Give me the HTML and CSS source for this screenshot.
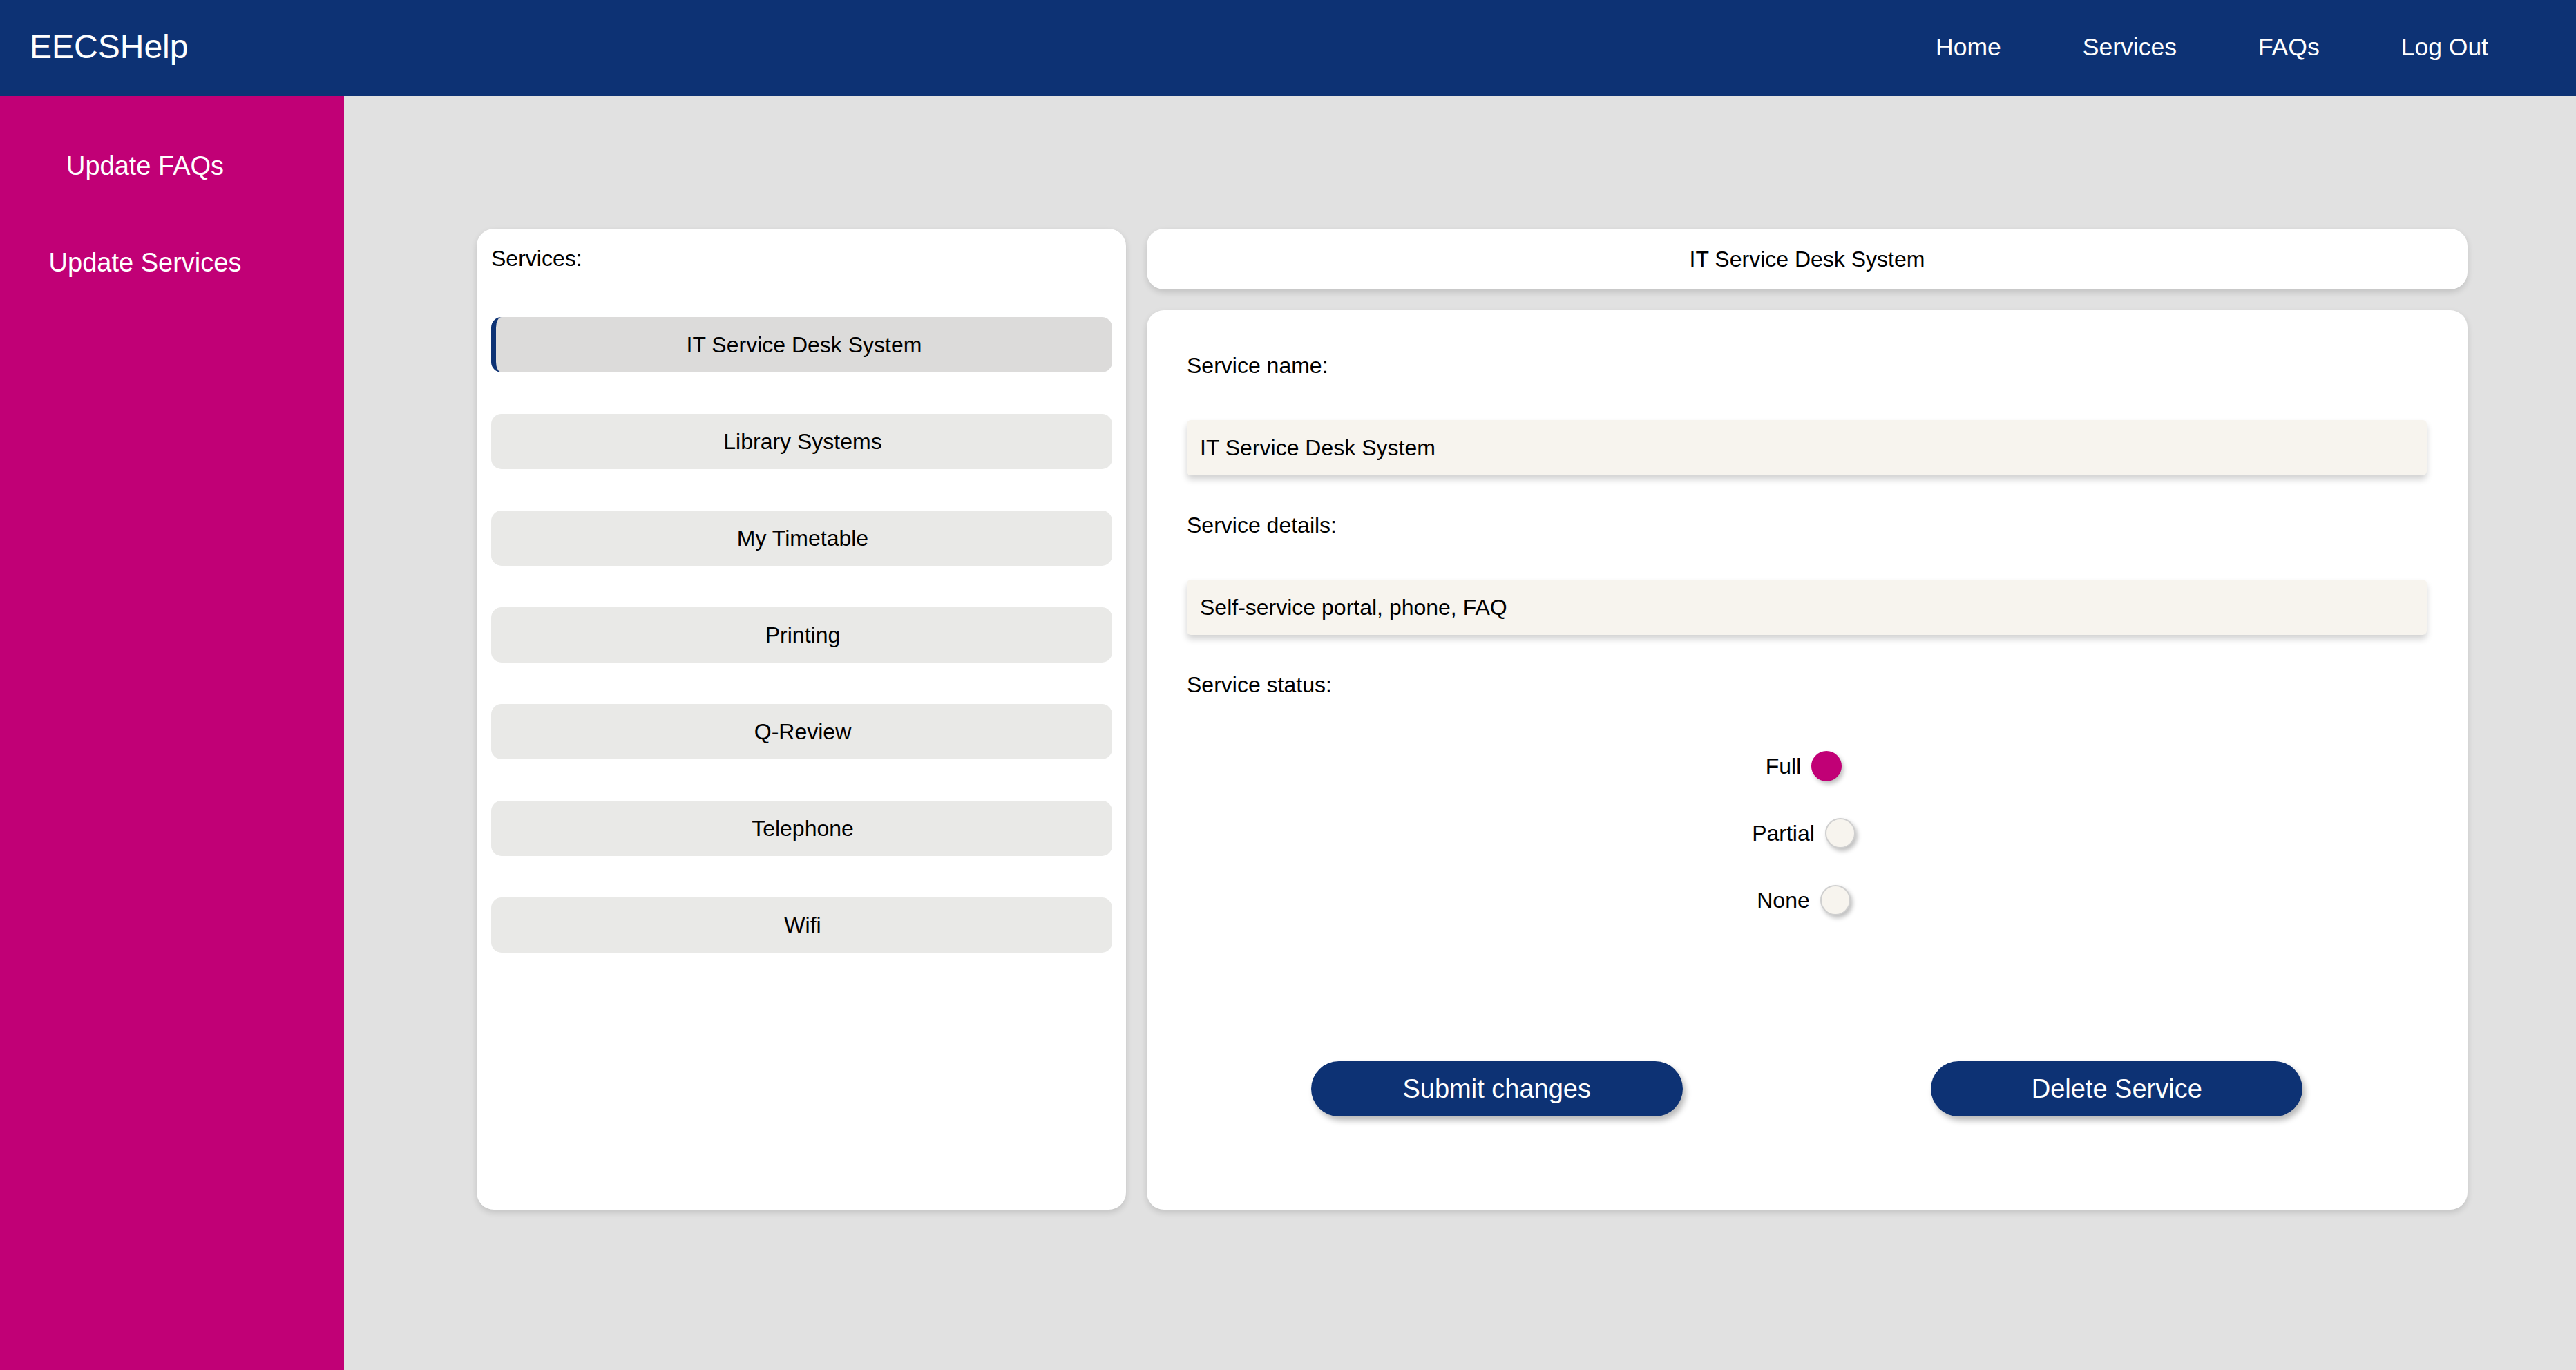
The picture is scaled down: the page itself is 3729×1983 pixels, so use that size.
FILE: index.html
```html
<!DOCTYPE html>
<html lang="en">
<head>
<meta charset="utf-8">
<title>EECSHelp - Update Services</title>
<link rel="stylesheet" href="styles.css">
</head>
<body>
<header class="topbar">
  <div class="logo">EECSHelp</div>
  <nav class="topnav">
    <a class="topnav-item" href="#">Home</a>
    <a class="topnav-item" href="#">Services</a>
    <a class="topnav-item" href="#">FAQs</a>
    <a class="topnav-item" href="#">Log Out</a>
  </nav>
</header>
<div class="layout">
  <aside class="sidebar">
    <a class="side-item" href="#">Update FAQs</a>
    <a class="side-item" href="#">Update Services</a>
  </aside>
  <main class="main">
    <div class="grid">
      <section class="card list-card">
        <div class="list-title">Services:</div>
        <div class="service-list">
          <button class="service-btn active">IT Service Desk System</button>
          <button class="service-btn">Library Systems</button>
          <button class="service-btn">My Timetable</button>
          <button class="service-btn">Printing</button>
          <button class="service-btn">Q-Review</button>
          <button class="service-btn">Telephone</button>
          <button class="service-btn">Wifi</button>
        </div>
      </section>
      <div class="right-col">
        <section class="card title-card">IT Service Desk System</section>
        <section class="card form-card">
          <div class="form-label">Service name:</div>
          <input class="field" type="text" value="IT Service Desk System">
          <div class="form-label">Service details:</div>
          <input class="field" type="text" value="Self-service portal, phone, FAQ">
          <div class="form-label">Service status:</div>
          <div class="radios">
            <label class="radio-row">Full <input class="radio" type="radio" name="status" checked></label>
            <label class="radio-row">Partial <input class="radio" type="radio" name="status"></label>
            <label class="radio-row">None <input class="radio" type="radio" name="status"></label>
          </div>
          <div class="actions">
            <div class="action-cell"><button class="action-btn">Submit changes</button></div>
            <div class="action-cell"><button class="action-btn">Delete Service</button></div>
          </div>
        </section>
      </div>
    </div>
  </main>
</div>
</body>
</html>
```
FILE: styles.css
```css
* { box-sizing: border-box; }
html, body {
  margin: 0;
  padding: 0;
  height: 100%;
}
body {
  font-family: "Liberation Sans", Arial, sans-serif;
  color: #000;
  background: #e1e1e1;
  display: flex;
  flex-direction: column;
  overflow: hidden;
}
a { text-decoration: none; color: inherit; }

.topbar {
  height: 139px;
  flex: 0 0 139px;
  background: #0d3274;
  color: #fff;
  display: flex;
  align-items: center;
  justify-content: space-between;
  padding: 0 68px 0 43px;
}
.logo {
  font-size: 48px;
  padding-bottom: 5px;
}
.topnav {
  display: flex;
  align-items: center;
}
.topnav-item {
  font-size: 35.5px;
  padding: 0 59px;
  color: #fff;
  padding-bottom: 2px;
}

.layout {
  flex: 1;
  display: flex;
  min-height: 0;
}
.sidebar {
  width: 498px;
  flex: 0 0 498px;
  background: #c10076;
  display: flex;
  flex-direction: column;
  align-items: center;
  padding: 79px 78px 0 0;
  gap: 96px;
}
.side-item {
  color: #fff;
  font-size: 38px;
  line-height: 44px;
}

.main {
  flex: 1;
  padding: 192px 157px 0 192px;
}
.grid {
  display: grid;
  grid-template-columns: 940px 1fr;
  gap: 30px;
  height: 1420px;
}
.card {
  background: #fff;
  border-radius: 25px;
  box-shadow: 0 4px 10px rgba(0, 0, 0, 0.14);
}
.list-card {
  padding: 25px 20px 0 21px;
}
.list-title {
  font-size: 32px;
  line-height: 37px;
  margin-bottom: 66px;
}
.service-list {
  display: flex;
  flex-direction: column;
  gap: 60px;
}
.service-btn {
  height: 80px;
  border: none;
  border-radius: 15px;
  background: #e9e9e7;
  font-family: "Liberation Sans", Arial, sans-serif;
  font-size: 32px;
  color: #000;
  padding: 0 0 0 3px;
  text-align: center;
}
.service-btn.active {
  background: #dcdbda;
  border-left: 7px solid #0d3274;
  padding-left: 0;
}

.right-col {
  display: flex;
  flex-direction: column;
  gap: 30px;
}
.title-card {
  height: 88px;
  flex: 0 0 88px;
  display: flex;
  align-items: center;
  justify-content: center;
  font-size: 32px;
}
.form-card {
  flex: 1;
  padding: 62px 59px 0 58px;
  display: flex;
  flex-direction: column;
}
.form-label {
  font-size: 32px;
  line-height: 37px;
  margin-bottom: 60px;
}
.field {
  height: 80px;
  border: none;
  border-radius: 6px;
  background: #f7f4ee;
  box-shadow: 0 6px 10px rgba(0, 0, 0, 0.18);
  font-family: "Liberation Sans", Arial, sans-serif;
  font-size: 32px;
  color: #000;
  padding: 0 19px;
  margin-bottom: 54px;
  outline: none;
}
.radios {
  display: flex;
  flex-direction: column;
  align-items: center;
  gap: 53px;
  margin-top: 17px;
}
.radio-row {
  display: flex;
  align-items: center;
  gap: 15px;
  font-size: 32px;
  height: 44px;
  margin-right: 9px;
}
.radio {
  appearance: none;
  -webkit-appearance: none;
  margin: 0;
  width: 44px;
  height: 44px;
  border-radius: 50%;
  border: 2px solid #cfcfcf;
  background: #f7f4ee;
  box-shadow: 3px 4px 6px rgba(0, 0, 0, 0.25);
}
.radio:checked {
  background: #c10076;
  border-color: #c10076;
}
.actions {
  display: grid;
  grid-template-columns: 1fr 1fr;
  margin-top: 211px;
}
.action-cell {
  display: flex;
  justify-content: center;
}
.action-btn {
  width: 538px;
  height: 80px;
  border: none;
  border-radius: 40px;
  background: #0d3274;
  color: #fff;
  font-family: "Liberation Sans", Arial, sans-serif;
  font-size: 38px;
  box-shadow: 4px 6px 8px rgba(0, 0, 0, 0.28);
}
```
